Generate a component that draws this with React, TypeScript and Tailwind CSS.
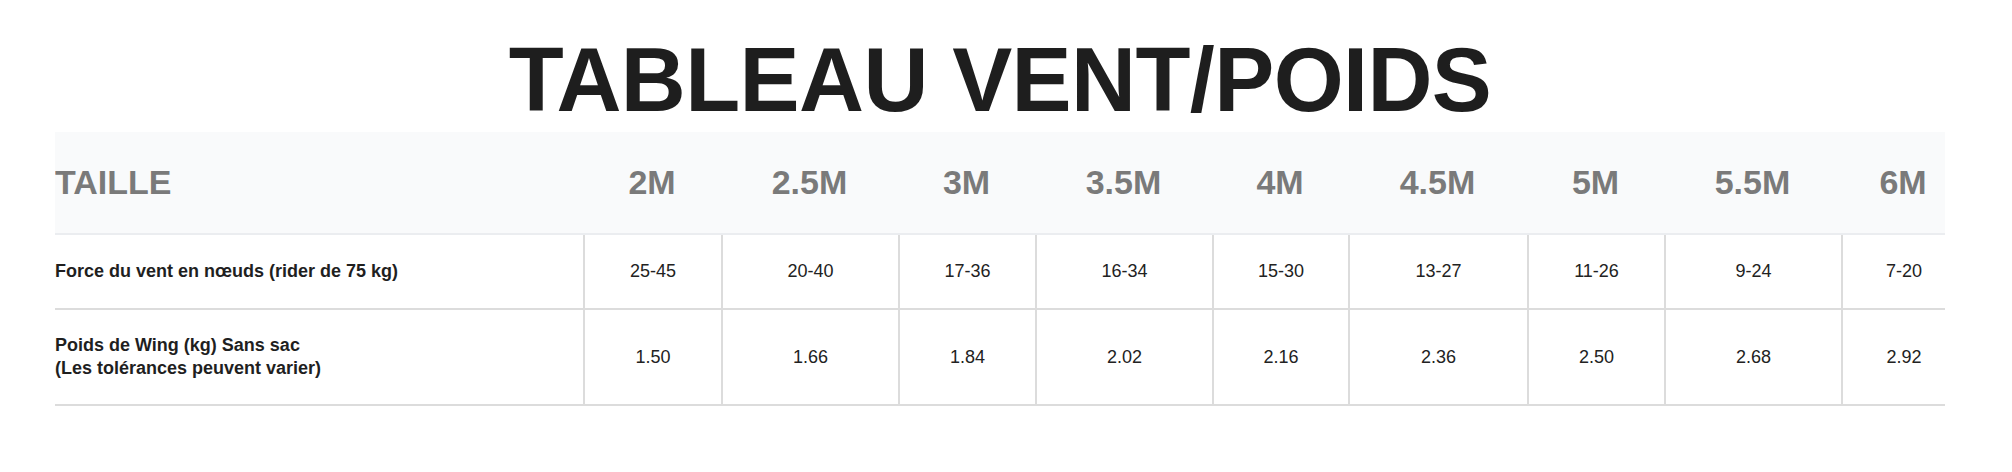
const sizes = ['2M', '2.5M', '3M', '3.5M', '4M', '4.5M', '5M', '5.5M', '6M']
const widths = ['w-[138px]', 'w-[177px]', 'w-[137px]', 'w-[177px]', 'w-[136px]', 'w-[179px]', 'w-[137px]', 'w-[177px]', 'w-[124px]']

const wind = ['25-45', '20-40', '17-36', '16-34', '15-30', '13-27', '11-26', '9-24', '7-20']
const weight = ['1.50', '1.66', '1.84', '2.02', '2.16', '2.36', '2.50', '2.68', '2.92']

export default function App() {
  return (
    <div className="min-h-[472px] bg-white pt-[35px] pl-[55px] pr-[67px] text-[#222] [font-family:'Liberation_Sans',Arial,sans-serif]">
      <h1 className="text-center text-[90px] font-bold leading-none tracking-[-0.6px] text-[#1e1e1e]">
        TABLEAU VENT/POIDS
      </h1>

      <div className="mt-[7px] overflow-hidden">
        <table className="w-[1910px] table-fixed border-separate border-spacing-0">
          <colgroup>
            <col className="w-[528px]" />
            {widths.map((w, i) => (
              <col key={i} className={w} />
            ))}
          </colgroup>
          <thead>
            <tr>
              <th className="h-[103px] border-b-2 border-[#ebedf0] bg-[#f9fafb] p-0 text-left align-middle text-[34px] font-bold text-[#7a7a7a]">
                TAILLE
              </th>
              {sizes.map((s) => (
                <th
                  key={s}
                  className="h-[103px] border-b-2 border-[#ebedf0] bg-[#f9fafb] p-0 text-center align-middle text-[34px] font-bold text-[#7a7a7a]"
                >
                  {s}
                </th>
              ))}
            </tr>
          </thead>
          <tbody className="text-[18px] leading-[23px]">
            <tr>
              <td className="border-b-2 border-[#dcdcdc] py-[25px] pl-0 font-bold text-[#1f1f1f]">
                Force du vent en nœuds (rider de 75 kg)
              </td>
              {wind.map((v, i) => (
                <td key={i} className="border-b-2 border-l-2 border-[#dcdcdc] py-[25px] text-center">
                  {v}
                </td>
              ))}
            </tr>
            <tr>
              <td className="border-b-2 border-[#dcdcdc] py-[24px] pl-0 font-bold text-[#1f1f1f]">
                Poids de Wing (kg) Sans sac
                <br />
                (Les tolérances peuvent varier)
              </td>
              {weight.map((v, i) => (
                <td key={i} className="border-b-2 border-l-2 border-[#dcdcdc] py-[24px] text-center">
                  {v}
                </td>
              ))}
            </tr>
          </tbody>
        </table>
      </div>
    </div>
  )
}
